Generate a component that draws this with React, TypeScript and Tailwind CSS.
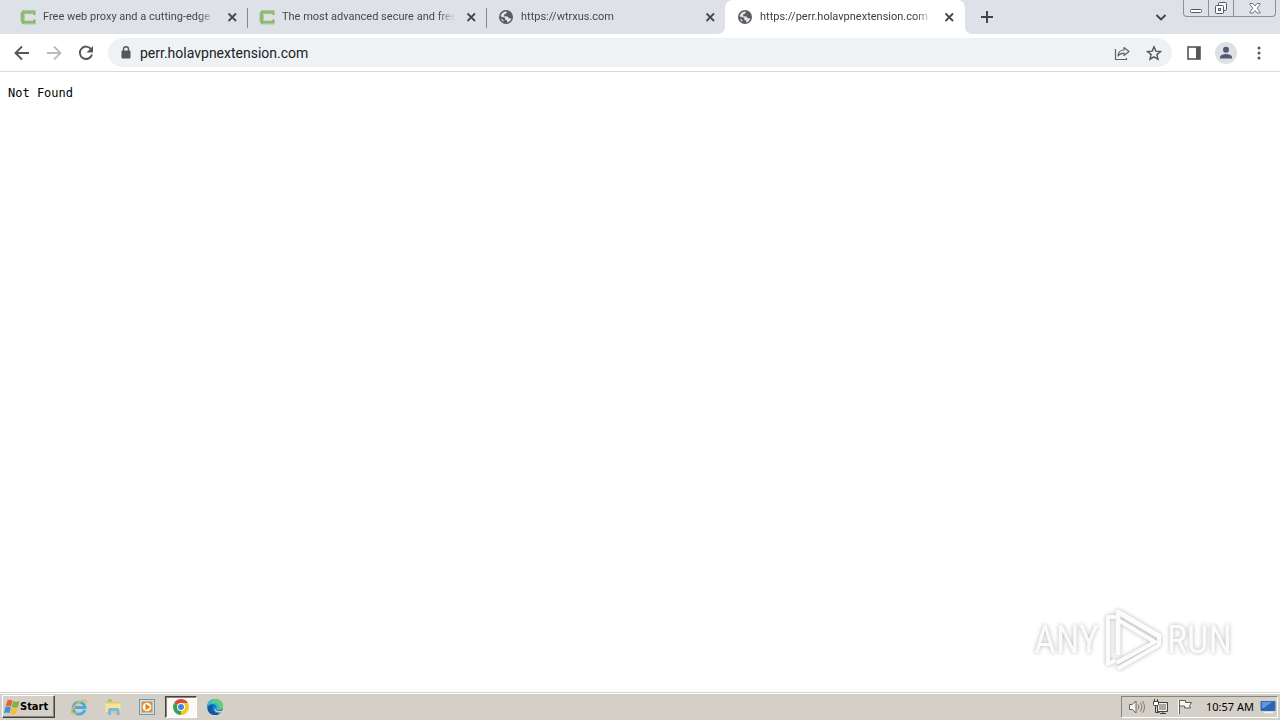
import type { ReactNode } from "react";

function LeafMark() {
  return (
    <svg viewBox="0 0 16 16" className="size-4 shrink-0" aria-hidden="true">
      <path d="M15.500 3H3.500L2.500 4.500v7.500l1 1.500h12" fill="none" stroke="#8dba70" strokeWidth="3.600" />
      <path d="M4 1.700h11M4 14.700h11M4.300 4v8" fill="none" stroke="#a8cc90" strokeWidth="1" />
      <path d="M14.500 4.500v1.500M14.500 10.500v2" stroke="#6fa24f" strokeWidth="1.600" />
    </svg>
  );
}

function Globe() {
  return (
    <svg viewBox="0 0 16 16" className="size-4 shrink-0" aria-hidden="true">
      <circle cx="8" cy="8" r="7" fill="#5a5d61" />
      <path
        d="M8.800 2.500 8.300 4.400 6.400 5.300 6 7.300l3.600.2 1.200 1.700 2.600.3c-.5 1.600-2 3.500-4.200 4.100l-.1-2-1.800-.9-.3-2-4.300-1.200C2.900 4.800 5.500 2.300 8.800 2.500Z"
        fill="#e3e5e9"
      />
      <path d="M2.500 7.800 6.500 9l.3 2 1.700 1-.2 1.800C5 13.800 2.300 11 2.500 7.800Z" fill="#5a5d61" />
      <path d="M3 9.500 5.300 11v1.800C4.200 12 3.300 11 3 9.500Z" fill="#e3e5e9" />
    </svg>
  );
}

function CloseIcon() {
  return (
    <svg viewBox="0 0 16 16" className="size-4" aria-hidden="true">
      <path d="m4.500 4.500 7.500 7.500M12 4.500 4.500 12" stroke="#45484d" strokeWidth="1.800" />
    </svg>
  );
}

type TabProps = { icon: ReactNode; title: string; active?: boolean; divider?: boolean };

function Tab({ icon, title, active, divider }: TabProps) {
  return (
    <div
      className={
        active
          ? "relative flex h-full w-60 min-w-0 items-center rounded-t-lg bg-white pr-2 pl-3 text-[#3c4043]"
          : "relative flex h-full w-[239px] min-w-0 items-center pr-[7px] pl-3 text-[#45484e]"
      }
    >
      {active && (
        <svg viewBox="0 0 8 8" className="absolute bottom-0 -left-2 size-2" aria-hidden="true">
          <path d="M8 0v8H0Q8 8 8 0Z" fill="#fff" />
        </svg>
      )}
      <button type="button" role="tab" aria-selected={!!active} className="flex min-w-0 flex-1 items-center gap-[7px] text-left">
        {icon}
        <span className="min-w-0 flex-1 overflow-hidden mask-r-from-90% text-[11px] leading-4 whitespace-nowrap">{title}</span>
      </button>
      <button type="button" aria-label={"Close " + title} className="ml-2">
        <CloseIcon />
      </button>
      {divider && <span className="absolute top-2 -right-px h-5 w-px bg-[#85888e]" />}
      {active && (
        <svg viewBox="0 0 8 8" className="absolute -right-2 bottom-0 size-2" aria-hidden="true">
          <path d="M0 0v8h8Q0 8 0 0Z" fill="#fff" />
        </svg>
      )}
    </div>
  );
}

function TabStrip() {
  return (
    <header className="flex h-[34px] items-center bg-[#dee1e8] pl-2">
      <div role="tablist" className="flex h-full min-w-0">
        <Tab icon={<LeafMark />} title="Free web proxy and a cutting-edge" divider />
        <Tab icon={<LeafMark />} title="The most advanced secure and free" divider />
        <Tab icon={<Globe />} title="https://wtrxus.com" />
        <Tab icon={<Globe />} title="https://perr.holavpnextension.com" active />
      </div>
      <button type="button" aria-label="New tab" className="ml-3.5">
        <svg viewBox="0 0 16 16" className="size-4" aria-hidden="true">
          <path d="M8 2v12M2 8h12" stroke="#3f4247" strokeWidth="1.900" />
        </svg>
      </button>
      <button type="button" aria-label="Search tabs" className="mr-[14px] ml-auto">
        <svg viewBox="0 0 16 16" className="size-4" aria-hidden="true">
          <path d="m3.500 6 4.500 4.500L12.500 6" fill="none" stroke="#3f4247" strokeWidth="1.800" />
        </svg>
      </button>
      <div className="mr-1 flex h-[17px] self-start rounded-b border border-t-0 border-[#8d9097]">
        <button type="button" aria-label="Minimize" className="flex w-[25px] items-center justify-center border-r border-[#8d9097]">
          <svg viewBox="0 0 14 14" className="size-3.5" aria-hidden="true">
            <rect x="1.500" y="8.500" width="11" height="3" rx="1" fill="#fff" stroke="#55585e" />
          </svg>
        </button>
        <button type="button" aria-label="Restore" className="flex w-[25px] items-center justify-center border-r border-[#8d9097]">
          <svg viewBox="0 0 14 14" className="size-3.5" aria-hidden="true">
            <rect x="4.500" y="1.500" width="8" height="8" rx="1" fill="#f4f5f8" stroke="#55585e" />
            <rect x="1.500" y="4.500" width="8" height="8" rx="1" fill="#fff" stroke="#55585e" />
            <rect x="4.500" y="7.500" width="2" height="2" fill="#fff" stroke="#55585e" />
          </svg>
        </button>
        <button type="button" aria-label="Close window" className="flex w-[41px] items-center justify-center">
          <svg viewBox="0 0 14 14" className="size-3.5" aria-hidden="true">
            <path
              d="M2 2.500h3l2 2.500 2-2.500h3v1L9.200 7.200 12 11v1H9L7 9.500 5 12H2v-1l2.800-3.800L2 3.500Z"
              fill="#fff"
              stroke="#65686e"
              strokeWidth=".9"
            />
          </svg>
        </button>
      </div>
    </header>
  );
}

function Toolbar() {
  return (
    <div className="flex h-[38px] items-center border-b border-[#d8dade] bg-white">
      <nav className="flex gap-3 pl-3" aria-label="History">
        <button type="button" aria-label="Back">
          <svg viewBox="0 0 20 20" className="size-5" aria-hidden="true">
            <path d="M17 10H4M10 3.500 3.500 10l6.500 6.500" fill="none" stroke="#54575b" strokeWidth="1.900" />
          </svg>
        </button>
        <button type="button" aria-label="Forward">
          <svg viewBox="0 0 20 20" className="size-5" aria-hidden="true">
            <path d="M3 10h13M10 3.500l6.500 6.500-6.500 6.500" fill="none" stroke="#b9bbbe" strokeWidth="1.800" />
          </svg>
        </button>
        <button type="button" aria-label="Reload">
          <svg viewBox="0 0 20 20" className="size-5" aria-hidden="true">
            <path d="M15.200 6.300A6.200 6.200 0 1 0 16 11.500" fill="none" stroke="#54575b" strokeWidth="1.900" />
            <path d="M17 3v6.500h-6.500Z" fill="#54575b" />
          </svg>
        </button>
      </nav>
      <div className="ml-3 flex h-[29px] min-w-0 flex-1 items-center rounded-full bg-[#eff2f5] pr-2.5 pl-3">
        <svg viewBox="0 0 12 14" className="h-3.5 w-3" aria-hidden="true">
          <rect x="1.500" y="4.500" width="9" height="8" rx="1" fill="#54575b" />
          <path d="M3.500 5.500V3.300a2.500 2.500 0 0 1 5 0v2.200" fill="none" stroke="#54575b" strokeWidth="1.400" />
        </svg>
        <input
          aria-label="Address"
          defaultValue="perr.holavpnextension.com"
          className="ml-2 min-w-0 flex-1 bg-transparent text-sm leading-5 text-[#202124] outline-none"
        />
        <button type="button" aria-label="Share this page" className="mr-4">
          <svg viewBox="0 0 16 16" className="size-4" aria-hidden="true">
            <path d="M1.500 4v10.500h11V13" fill="none" stroke="#5f6266" strokeWidth="1.200" />
            <path d="M4 11C4.300 7 6.500 5 10 5V2.500l5 4-5 4V8.200C7.500 8.200 5.500 9 4 11Z" fill="none" stroke="#5f6266" strokeWidth="1.200" strokeLinejoin="round" />
          </svg>
        </button>
        <button type="button" aria-label="Bookmark this tab">
          <svg viewBox="0 0 16 16" className="size-4" aria-hidden="true">
            <path d="m8 1.800 1.800 4.300 4.700.4-3.600 3.100 1.100 4.600L8 11.800l-4 2.400 1.100-4.600-3.600-3.100 4.700-.4Z" fill="none" stroke="#54575b" strokeWidth="1.400" />
          </svg>
        </button>
      </div>
      <div className="flex items-center gap-3 pr-[11px] pl-3.5">
        <button type="button" aria-label="Side panel" className="mr-px">
          <svg viewBox="0 0 16 16" className="size-4" aria-hidden="true">
            <rect x="2" y="2" width="12" height="12" fill="none" stroke="#54575b" strokeWidth="1.600" />
            <path d="M10 2h4v12h-4Z" fill="#54575b" />
          </svg>
        </button>
        <button type="button" aria-label="Profile" className="rounded-full bg-[#dde0e5]">
          <svg viewBox="0 0 22 22" className="size-[22px]" aria-hidden="true">
            <circle cx="11" cy="7.800" r="3" fill="#4f5a75" />
            <path d="M5 16.500v-1.300c0-2.200 4-3.200 6-3.200s6 1 6 3.200v1.300Z" fill="#4f5a75" />
          </svg>
        </button>
        <button type="button" aria-label="Menu">
          <svg viewBox="0 0 20 20" className="size-5" aria-hidden="true">
            <g fill="#54575b">
              <circle cx="10" cy="5" r="1.500" />
              <circle cx="10" cy="10" r="1.500" />
              <circle cx="10" cy="15" r="1.500" />
            </g>
          </svg>
        </button>
      </div>
    </div>
  );
}

function Watermark() {
  return (
    <div className="absolute right-12 bottom-5 flex items-center gap-1 font-['Liberation_Sans_Narrow','Roboto_Condensed','Open_Sans_Condensed',Roboto,sans-serif] text-[38px] leading-none text-[#fbfbfb] drop-shadow-[0_0_2px_#b5b5b5]">
      <span>ANY</span>
      <svg viewBox="0 0 60 64" className="h-16 w-[60px]" aria-hidden="true">
        <g fill="none" stroke="#fcfcfc" strokeLinejoin="round" strokeLinecap="round">
          <path d="M11 9H5v47l6-3" strokeWidth="4" />
          <path d="M15 45V4l41 24" strokeWidth="5" />
          <path d="M15 12 52 34 15 54M16 60l40-23v-9" strokeWidth="4" />
        </g>
      </svg>
      <span>RUN</span>
    </div>
  );
}

function WindowsFlag() {
  return (
    <svg viewBox="0 0 16 16" className="size-4" aria-hidden="true">
      <path d="M3.500 1.500q2.500-1.600 5 0L7.200 7.500q-3-1.500-5.700 0Z" fill="#e8632e" />
      <path d="M9.200 2q2.500 1.500 6.300 0l-1.500 6q-3 1.500-6.200 0Z" fill="#7ab547" />
      <path d="M1.300 8.300q2.700-1.500 5.700 0l-1.500 6q-2.700-1.500-5.500 0Z" fill="#4291d4" />
      <path d="M7.600 8.800q3 1.500 6.200 0l-1.500 6q-3.200 1.500-6.200 0Z" fill="#f4bd3a" />
    </svg>
  );
}

function ExplorerE() {
  return (
    <svg viewBox="0 0 18 18" className="size-[18px]" aria-hidden="true">
      <path d="M14.800 11.800A6 6 0 1 1 15 9.500H5" fill="none" stroke="#47acdf" strokeWidth="2.800" />
      <path d="M2 15.500C-.5 12 7 4 12.500 2.500 16 1.500 17 3 16 5" fill="none" stroke="#e4ba45" strokeWidth="1.400" />
      <path d="M2 15.500c1.500 1 4-.2 6-1.500" fill="none" stroke="#e4ba45" strokeWidth="1.300" />
    </svg>
  );
}

function FolderIcon() {
  return (
    <svg viewBox="0 0 18 18" className="size-[18px]" aria-hidden="true">
      <path d="M2 2.500h5l1 1.500h8V15H2Z" fill="#e8c767" />
      <path d="M4 1.500h4v2H4Z" fill="#8bc489" />
      <path d="M1.500 5.500h15V14h-15Z" fill="#f6e49b" />
      <path d="M4 17v-5q0-2 2-2h7.500q2 0 2 2v5h-3v-3.500H7V17Z" fill="#79b9dc" />
    </svg>
  );
}

function MediaIcon() {
  return (
    <svg viewBox="0 0 18 18" className="size-[18px]" aria-hidden="true">
      <rect x="1.500" y="1.500" width="15" height="15" fill="#c9e2f3" stroke="#5a9ccc" />
      <rect x="3.500" y="3.500" width="11" height="11" fill="#ee8b24" />
      <circle cx="9" cy="9" r="4.300" fill="#fff" />
      <path d="m7.500 5.800 5 3.200-5 3.200Z" fill="#e87d18" />
    </svg>
  );
}

function ChromeIcon() {
  return (
    <svg viewBox="0 0 18 18" className="size-[18px]" aria-hidden="true">
      <path d="M9 9 2.100 5A8 8 0 0 1 15.900 5Z" fill="#df4937" />
      <path d="M9 9 15.900 5A8 8 0 0 1 9 17Z" fill="#f5c728" />
      <path d="M9 9v8A8 8 0 0 1 2.100 5Z" fill="#35a354" />
      <path d="M9 5h6.900L12.500 11 9 17l3-6Z" fill="#f5c728" />
      <circle cx="9" cy="9" r="4" fill="#fff" />
      <circle cx="9" cy="9" r="3" fill="#4285dc" />
    </svg>
  );
}

function EdgeIcon() {
  return (
    <svg viewBox="0 0 18 18" className="size-[18px]" aria-hidden="true">
      <circle cx="9" cy="9" r="8" fill="#1876c8" />
      <path d="M1 9C1.500 3 6 1 9 1c5 0 8 3.500 8 7 0 3-2.500 4-4.500 4S9.500 11 10.500 9.500C11 6 4 4 1 9Z" fill="#35bfc4" />
      <path d="M7 1.300C13-.5 17 4 17 8c0 3-2.500 4-4.500 4 3-3.500-1-9-7.500-7Z" fill="#67cf72" />
      <path d="M6.500 8C5 12 8 16 13.500 15.500 10 18.500 3 17 2 12 1.500 8 5 6 8 7.500Z" fill="#15549e" />
      <path d="M9.300 9.500C8.500 12 12 14 16.500 12.500l-1 1.700C10 16 7 11.500 9.300 9.500Z" fill="#d4d0c8" />
    </svg>
  );
}

function Taskbar() {
  return (
    <footer className="flex h-7 items-center border-t border-[#d5d2cc] bg-[#d4d0c8] pr-0.5 pl-0.5 font-['Noto_Sans',sans-serif] shadow-[inset_0_1px_0_#fff]">
      <button
        type="button"
        className="flex h-[23px] w-[53px] items-center border border-t-white border-r-[#45433f] border-b-[#45433f] border-l-white pl-px font-['DejaVu_Sans_Condensed','DejaVu_Sans',sans-serif] text-[11px] leading-4 font-bold text-black shadow-[inset_-1px_-1px_0_#88857e]"
      >
        <WindowsFlag />
        Start
      </button>
      <nav aria-label="Taskbar" className="ml-[7px] flex">
        <button type="button" aria-label="Internet Explorer" className="flex h-[22px] w-[34px] items-center justify-center"><ExplorerE /></button>
        <button type="button" aria-label="File Explorer" className="flex h-[22px] w-[34px] items-center justify-center"><FolderIcon /></button>
        <button type="button" aria-label="Media Player" className="flex h-[22px] w-[34px] items-center justify-center"><MediaIcon /></button>
        <button type="button" aria-label="Chrome" className="flex h-[22px] w-[34px] items-center justify-center">
          <span className="flex h-[22px] w-8 items-center justify-center border border-t-[#45433f] border-r-white border-b-white border-l-[#45433f] bg-[#fbfaf9] shadow-[inset_1px_1px_0_#88857e]">
            <ChromeIcon />
          </span>
        </button>
        <button type="button" aria-label="Edge" className="flex h-[22px] w-[34px] items-center justify-center"><EdgeIcon /></button>
      </nav>
      <div className="ml-auto flex h-[22px] items-center border border-t-[#88857e] border-r-white border-b-white border-l-[#88857e] pr-px pl-1.5">
        <svg viewBox="0 0 18 18" className="size-[18px]" aria-hidden="true">
          <path d="M1.500 6.500h2.800L8 3v12l-3.700-3.500H1.500Z" fill="#f6f6f4" stroke="#67655f" />
          <path d="M10 6.500q1.800 2.500 0 5M12.500 4.500q3 4.500 0 9M14.500 3q4 6 0 12" fill="none" stroke="#807d77" />
        </svg>
        <svg viewBox="0 0 18 18" className="ml-1.5 size-[18px]" aria-hidden="true">
          <path d="M5.500 4.500h10v9h-10Z" fill="#aaa8a2" stroke="#45433f" />
          <path d="M6.500 5.500h8v7h-8Z" fill="none" stroke="#efeeea" />
          <path d="M8 15.500h6M11 13.500v2" fill="none" stroke="#45433f" />
          <path d="M1.500 3.500h5v3q0 1-1 1h-3q-1 0-1-1ZM2.500 1v2M5.500 1v2" fill="#fff" stroke="#45433f" />
          <path d="M3.500 7.500v7h4" fill="none" stroke="#45433f" />
        </svg>
        <svg viewBox="0 0 18 18" className="ml-1.5 size-[18px]" aria-hidden="true">
          <path d="M3.500 2v14M3.500 2.500h6v2h6l-2 3 1 2.500h-6v-2h-5" fill="#f8f8f6" stroke="#5f5d58" />
          <path d="M2.500 2v14" stroke="#fff" />
        </svg>
        <time className="ml-3 text-[11px] leading-4 text-black">10:57 AM</time>
        <svg viewBox="0 0 16 16" className="ml-1.5 size-4" aria-hidden="true">
          <path d="M1 2.500h14v9H1Z" fill="#2866b5" stroke="#3a6aa8" />
          <path d="M2 3h10L4 9H2Z" fill="#5c99dc" />
          <path d="M4 13.500h9" stroke="#edf2f7" strokeWidth="1.500" />
        </svg>
      </div>
    </footer>
  );
}

export default function App() {
  return (
    <div className="flex min-h-screen flex-col bg-white font-[Roboto,sans-serif]">
      <TabStrip />
      <Toolbar />
      <main className="relative flex-1 p-2 pt-3">
        <pre className="font-['DejaVu_Sans_Mono',monospace] text-[12px] leading-[18px] text-black">Not Found</pre>
        <Watermark />
      </main>
      <Taskbar />
    </div>
  );
}
